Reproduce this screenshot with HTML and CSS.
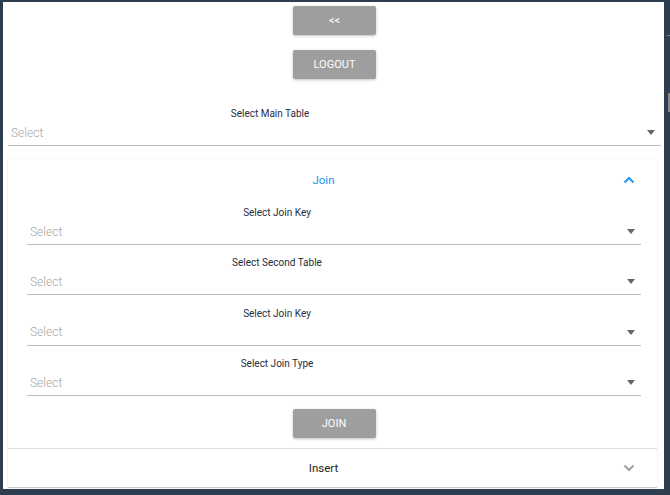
FILE: index.html
```html
<!DOCTYPE html>
<html>
<head>
<meta charset="utf-8">
<link rel="stylesheet" href="styles.css">
</head>
<body>
<div class="frame">
  <div class="panel">
    <div class="top-buttons">
      <button class="btn">&lt;&lt;</button>
      <button class="btn">LOGOUT</button>
    </div>

    <div class="field main-field">
      <div class="label main-label">Select Main Table</div>
      <div class="select">
        <span class="placeholder">Select</span>
        <span class="caret"></span>
      </div>
    </div>

    <div class="card">
      <div class="card-header open">
        <span class="card-title">Join</span>
        <svg class="chev" width="12" height="8" viewBox="0 0 12 8"><path d="M1.5 6.5 L6 2 L10.5 6.5" fill="none" stroke="#2196f3" stroke-width="2"/></svg>
      </div>
      <div class="card-body">
        <div class="field inner-field">
          <div class="label">Select Join Key</div>
          <div class="select"><span class="placeholder">Select</span><span class="caret"></span></div>
        </div>
        <div class="field inner-field">
          <div class="label">Select Second Table</div>
          <div class="select"><span class="placeholder">Select</span><span class="caret"></span></div>
        </div>
        <div class="field inner-field">
          <div class="label">Select Join Key</div>
          <div class="select"><span class="placeholder">Select</span><span class="caret"></span></div>
        </div>
        <div class="field inner-field">
          <div class="label">Select Join Type</div>
          <div class="select"><span class="placeholder">Select</span><span class="caret"></span></div>
        </div>
        <div class="join-row">
          <button class="btn">JOIN</button>
        </div>
      </div>
      <div class="card-header closed">
        <span class="card-title dark">Insert</span>
        <svg class="chev" width="12" height="8" viewBox="0 0 12 8"><path d="M1.5 1.5 L6 6 L10.5 1.5" fill="none" stroke="#9e9e9e" stroke-width="2"/></svg>
      </div>
    </div>
  </div>
  <div class="edge">
    <span class="edge-line"></span>
    <span class="edge-block"></span>
  </div>
</div>
</body>
</html>
```
FILE: styles.css
```css
* { box-sizing: border-box; }
html, body {
  margin: 0;
  padding: 0;
  width: 670px;
  height: 495px;
  overflow: hidden;
  background: #2c3e50;
  font-family: Roboto, "Liberation Sans", sans-serif;
}
.frame {
  display: flex;
  height: 495px;
}
.panel {
  margin: 2px 0 0 3px;
  width: 661px;
  height: 487px;
  background: #fff;
  overflow: hidden;
}
.edge {
  position: relative;
  flex: 1;
}
.edge-line {
  position: absolute;
  left: 3px;
  top: 35px;
  width: 3px;
  height: 1px;
  background: #7f8c8d;
}
.edge-block {
  position: absolute;
  left: 4px;
  top: 93px;
  width: 2px;
  height: 19px;
  background: #8a8a8a;
}
.top-buttons {
  display: flex;
  flex-direction: column;
  align-items: center;
  gap: 15px;
  padding: 4px 0 0 2px;
}
.btn {
  width: 83px;
  height: 29px;
  border: none;
  border-radius: 2px;
  background: #9e9e9e;
  color: #fff;
  font-family: Roboto, "Liberation Sans", sans-serif;
  font-size: 11px;
  box-shadow: 0 1px 3px rgba(0,0,0,0.25);
  padding: 0;
}
.field {
  display: flex;
  flex-direction: column;
}
.main-field {
  margin: 29px 3px 0 5px;
}
.label {
  font-size: 10px;
  color: #1f2d3d;
  text-align: center;
  width: 500px;
  line-height: 12px;
}
.main-label {
  width: 524px;
}
.select {
  display: flex;
  align-items: center;
  justify-content: space-between;
  height: 26px;
  border-bottom: 1px solid #bdbdbd;
  padding: 0 6px 0 3px;
}
.placeholder {
  font-size: 12px;
  font-weight: 300;
  color: #a8a8a8;
}
.caret {
  width: 0;
  height: 0;
  border-left: 4px solid transparent;
  border-right: 4px solid transparent;
  border-top: 5px solid #666;
}
.card {
  margin: 13px 7px 0 5px;
  background: #fff;
  box-shadow: 0 0 2px rgba(0,0,0,0.08), 0 1px 1px rgba(0,0,0,0.18);
}
.card-header {
  display: flex;
  align-items: center;
  height: 42px;
  padding: 0 22px 0 16px;
}
.card-header.closed {
  border-top: 1px solid #e0e0e0;
  height: 39px;
}
.card-title {
  flex: 1;
  text-align: center;
  font-size: 11.5px;
  color: #2196f3;
}
.card-title.dark {
  color: #222;
}
.card-body {
  padding: 6px 16px 10px 19px;
}
.inner-field {
  margin-bottom: 12.4px;
}
.join-row {
  display: flex;
  justify-content: center;
  margin-top: 1.4px;
}
```
